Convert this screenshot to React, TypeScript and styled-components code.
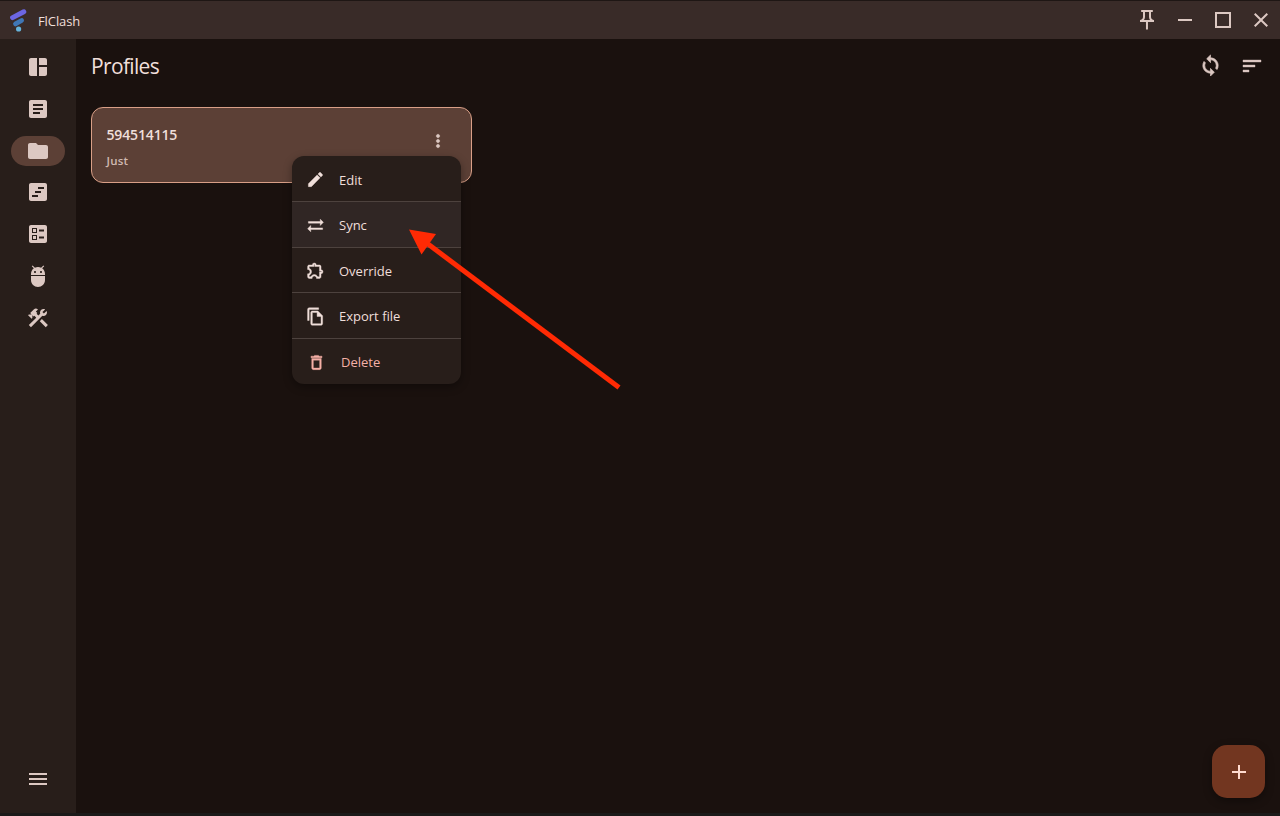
import React from "react";
import styled, { createGlobalStyle } from "styled-components";
import {
  MdAdb,
  MdAdd,
  MdArticle,
  MdBallot,
  MdClose,
  MdConstruction,
  MdEdit,
  MdFolder,
  MdMenu,
  MdMoreVert,
  MdOutlineDelete,
  MdOutlineExtension,
  MdOutlineFileCopy,
  MdOutlinePushPin,
  MdSort,
  MdSpaceDashboard,
  MdSync,
  MdSyncAlt,
  MdViewTimeline,
} from "react-icons/md";

const GlobalStyle = createGlobalStyle`
  * { box-sizing: border-box; }
  body {
    margin: 0;
    background: #1a110e;
    font-family: "Open Sans", "Noto Sans", sans-serif;
    color: #f0dfda;
    overflow: hidden;
  }
  /* Icon bounding paths stay invisible when an icon is emboldened by a stroke. */
  svg path[fill="none"] { stroke: none; }
`;

const Window = styled.div`
  display: flex;
  flex-direction: column;
  width: 1280px;
  height: 816px;
  background: #1a110e;
  border-top: 1px solid #1e1614;
  border-bottom: 3px solid #1b1a19;
`;

const TitleBar = styled.header`
  display: flex;
  align-items: center;
  justify-content: space-between;
  height: 38px;
  flex: none;
  padding: 0 7px 0 8px;
  background: #392b28;
`;

const Brand = styled.div`
  display: flex;
  align-items: center;
  gap: 9px;
  font-size: 13px;
  letter-spacing: -0.1px;
  line-height: 20px;
  padding-top: 1px;
`;

const WindowControls = styled.div`
  display: flex;
  gap: 14px;
  color: #dcc8c2;
`;

const Body = styled.div`
  display: flex;
  flex: 1;
`;

const Rail = styled.nav`
  display: flex;
  flex-direction: column;
  justify-content: space-between;
  width: 76px;
  padding: 13px 11px 19px;
  background: #281e1a;
  color: #dcc8c2;
`;

const RailGroup = styled.div`
  display: flex;
  flex-direction: column;
  gap: 11.8px;
`;

const RailItem = styled.div<{ $active?: boolean }>`
  display: flex;
  align-items: center;
  justify-content: center;
  width: 54px;
  height: 30px;
  border-radius: 15px;
  background: ${(p) => (p.$active ? "#5c4036" : "transparent")};
`;

const Main = styled.main`
  display: flex;
  flex-direction: column;
  flex: 1;
  padding: 0 15px 15px;
`;

const PageHeader = styled.div`
  display: flex;
  align-items: center;
  justify-content: space-between;
  height: 54px;
`;

const PageTitle = styled.h1`
  margin: 0;
  font-size: 21px;
  font-weight: 400;
  line-height: 28px;
  letter-spacing: -0.65px;
`;

const HeaderActions = styled.div`
  display: flex;
  gap: 18px;
  margin-right: 1px;
  color: #dcc8c2;
`;

const ProfileCard = styled.section`
  position: relative;
  display: flex;
  justify-content: space-between;
  width: 381px;
  height: 76px;
  margin-top: 14px;
  padding: 17px 23px 0 14.5px;
  background: #5c4036;
  border: 1px solid #d99f87;
  border-radius: 12px;
`;

const ProfileName = styled.div`
  font-size: 14px;
  font-weight: 600;
  line-height: 20px;
  letter-spacing: -0.15px;
`;

const ProfileStatus = styled.div`
  margin-top: 8px;
  font-size: 11.5px;
  font-weight: 600;
  line-height: 16px;
  letter-spacing: 0.2px;
  color: #d0b9b1;
`;

const MoreButton = styled.div`
  height: 20px;
  margin-top: 6px;
  color: #dcc8c2;

  svg {
    stroke: currentColor;
    stroke-width: 0.6px;
  }
`;

const Menu = styled.div`
  position: absolute;
  top: 48px;
  left: 199.5px;
  width: 169.5px;
  overflow: hidden;
  border-radius: 12px;
  background: #281e1a;
  box-shadow: 0 3px 8px rgba(0, 0, 0, 0.35);
`;

const MenuItem = styled.div<{ $hovered?: boolean; $danger?: boolean }>`
  display: flex;
  align-items: center;
  gap: ${(p) => (p.$danger ? 15.5 : 14.5)}px;
  height: 45.6px;
  padding: 1.4px 0 0 ${(p) => (p.$danger ? 15 : 14)}px;
  font-size: 13px;
  color: ${(p) => (p.$danger ? "#f5b0a7" : "#f0dfda")};
  background: ${(p) => (p.$hovered ? "#302624" : "transparent")};

  &:first-child {
    height: 45.3px;
    padding-top: 2.5px;
  }

  & + & {
    border-top: 1px solid #4d423e;
  }

  svg {
    stroke: currentColor;
    stroke-width: 0.5px;
  }
`;

const AddButton = styled.div`
  display: flex;
  align-items: center;
  justify-content: center;
  align-self: flex-end;
  width: 53px;
  height: 53px;
  margin-top: auto;
  border-radius: 15px;
  background: #723620;
  color: #ffdbcf;
  box-shadow: 0 3px 8px rgba(0, 0, 0, 0.35);
`;

const Pointer = styled.svg`
  position: absolute;
  left: 400px;
  top: 220px;
  pointer-events: none;
`;

const Logo = () => (
  <svg width="21" height="24" viewBox="0 0 21 24" fill="none" strokeLinecap="round">
    <path d="M4.6 8.6 15.8 2.8" stroke="#6c66e3" strokeWidth="5" />
    <path d="M7.5 14.9 13.6 11.5" stroke="#3f76b5" strokeWidth="4.8" />
    <circle cx="10.6" cy="20" r="2.6" fill="#67b4dc" />
  </svg>
);

const MinimizeIcon = () => (
  <svg width="24" height="24" viewBox="0 0 24 24" fill="currentColor">
    <path d="M5 11h14v2H5z" />
  </svg>
);

const MaximizeIcon = () => (
  <svg width="24" height="24" viewBox="0 0 24 24" fill="none" stroke="currentColor">
    <rect x="5" y="5" width="14" height="14" strokeWidth="2" />
  </svg>
);

const railIcons = [
  MdSpaceDashboard,
  MdArticle,
  MdFolder,
  MdViewTimeline,
  MdBallot,
  MdAdb,
  MdConstruction,
];

const menuItems = [
  { label: "Edit", Icon: MdEdit },
  { label: "Sync", Icon: MdSyncAlt, hovered: true },
  { label: "Override", Icon: MdOutlineExtension },
  { label: "Export file", Icon: MdOutlineFileCopy },
  { label: "Delete", Icon: MdOutlineDelete, danger: true },
];

export default function App() {
  return (
    <>
      <GlobalStyle />
      <Window>
        <TitleBar>
          <Brand>
            <Logo />
            FlClash
          </Brand>
          <WindowControls>
            <MdOutlinePushPin size={24} />
            <MinimizeIcon />
            <MaximizeIcon />
            <MdClose size={24} />
          </WindowControls>
        </TitleBar>
        <Body>
          <Rail>
            <RailGroup>
              {railIcons.map((Icon, i) => (
                <RailItem key={i} $active={i === 2}>
                  <Icon size={24} />
                </RailItem>
              ))}
            </RailGroup>
            <RailItem>
              <MdMenu size={24} />
            </RailItem>
          </Rail>
          <Main>
            <PageHeader>
              <PageTitle>Profiles</PageTitle>
              <HeaderActions>
                <MdSync size={23} stroke="currentColor" strokeWidth={0.7} />
                <MdSort size={24} stroke="currentColor" strokeWidth={0.4} />
              </HeaderActions>
            </PageHeader>
            <ProfileCard>
              <div>
                <ProfileName>594514115</ProfileName>
                <ProfileStatus>Just</ProfileStatus>
              </div>
              <MoreButton>
                <MdMoreVert size={20} />
              </MoreButton>
              <Menu>
                {menuItems.map(({ label, Icon, hovered, danger }) => (
                  <MenuItem key={label} $hovered={hovered} $danger={danger}>
                    <Icon size={19} />
                    {label}
                  </MenuItem>
                ))}
              </Menu>
            </ProfileCard>
            <AddButton>
              <MdAdd size={24} />
            </AddButton>
          </Main>
        </Body>
      </Window>
      <Pointer width="230" height="180" viewBox="0 0 230 180">
        <path d="M28 24 219 167.5" stroke="#ff2a04" strokeWidth="5" />
        <path d="M9 9.5 36 14 21.5 34.5z" fill="#ff2a04" />
      </Pointer>
    </>
  );
}
